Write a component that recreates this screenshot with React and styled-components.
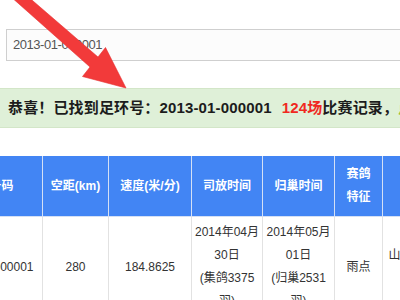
import React from "react";
import styled, { createGlobalStyle } from "styled-components";

const GlobalStyle = createGlobalStyle`
  html, body { margin: 0; padding: 0; background: #fff; }
  body { font-family: "Liberation Sans", "Noto Sans CJK SC", sans-serif; overflow: hidden; }
`;

const Page = styled.div`
  position: relative;
  width: 400px;
  height: 300px;
  overflow: hidden;
  background: #fff;
`;

const SearchRow = styled.div`
  padding: 29px 0 0 6px;
`;

const SearchInput = styled.div`
  box-sizing: border-box;
  width: 430px;
  height: 32px;
  border: 1px solid #cfcfcf;
  background: #fcfcfc;
  color: #555;
  font-size: 13px;
  line-height: 30px;
  padding-left: 6px;
  letter-spacing: -0.45px;
`;

const Alert = styled.div`
  box-sizing: border-box;
  margin-top: 27px;
  width: 440px;
  height: 40px;
  background: #dff0d8;
  border-top: 1px solid #d3e6c8;
  border-bottom: 1px solid #d3e6c8;
  padding-left: 8px;
  font-size: 15px;
  font-weight: bold;
  line-height: 38px;
  color: #1c1c1c;
  white-space: nowrap;
  letter-spacing: 0.15px;
`;

const Mark = styled.span`
  color: ${(p) => p.$color};
  margin-left: ${(p) => p.$gap || 0}px;
`;

const Table = styled.table`
  margin-top: 28px;
  margin-left: -64px;
  width: ${(p) => p.$width}px;
  border-collapse: collapse;
  table-layout: fixed;
  font-size: 12px;
`;

const Th = styled.th`
  background: #4285f4;
  color: #fff;
  font-weight: bold;
  line-height: 23px;
  padding: 7px ${(p) => p.$pad ?? 3}px;
  border: 1px solid #d4e0f5;
  border-top: none;
  text-align: center;
  vertical-align: middle;
`;

const Td = styled.td`
  color: #333;
  line-height: 23px;
  padding: 4px 1px;
  border: 1px solid #e2e2e2;
  border-top: none;
  text-align: center;
  vertical-align: middle;
`;

const ArrowSvg = styled.svg`
  position: absolute;
  left: 0;
  top: 0;
  pointer-events: none;
`;

const cols = [106, 66, 83, 71, 72, 48, 84];
const tableWidth = cols.reduce((a, b) => a + b, 0);

export default function App() {
  return (
    <>
      <GlobalStyle />
      <Page>
        <SearchRow>
          <SearchInput>2013-01-000001</SearchInput>
        </SearchRow>
        <Alert>
          恭喜！已找到足环号：2013-01-000001
          <Mark $color="#f0291f" $gap={10}>124场</Mark>比赛记录，
          <Mark $color="#9bbf3a">点击查看</Mark>
        </Alert>
        <Table $width={tableWidth}>
          <colgroup>
            {cols.map((w, i) => (
              <col key={i} style={{ width: w }} />
            ))}
          </colgroup>
          <thead>
            <tr>
              <Th>足环号码</Th>
              <Th>空距(km)</Th>
              <Th>速度(米/分)</Th>
              <Th>司放时间</Th>
              <Th>归巢时间</Th>
              <Th $pad={6}>赛鸽特征</Th>
              <Th>鸽主</Th>
            </tr>
          </thead>
          <tbody>
            <tr>
              <Td>2013-01-000001</Td>
              <Td>280</Td>
              <Td>184.8625</Td>
              <Td>
                2014年04月
                <br />
                30日
                <br />
                (集鸽3375羽)
              </Td>
              <Td>
                2014年05月
                <br />
                01日
                <br />
                (归巢2531羽)
              </Td>
              <Td>雨点</Td>
              <Td>山东省济南市历城区</Td>
            </tr>
          </tbody>
        </Table>
        <ArrowSvg width="400" height="300" viewBox="0 0 400 300">
          <polygon
            points="1,-12 11,-18 98,57 105.5,47.5 126,88 82.5,76.5 90,67"
            fill="#f23a3a"
            stroke="#e53030"
            strokeWidth="0.6"
            strokeLinejoin="round"
          />
        </ArrowSvg>
      </Page>
    </>
  );
}
